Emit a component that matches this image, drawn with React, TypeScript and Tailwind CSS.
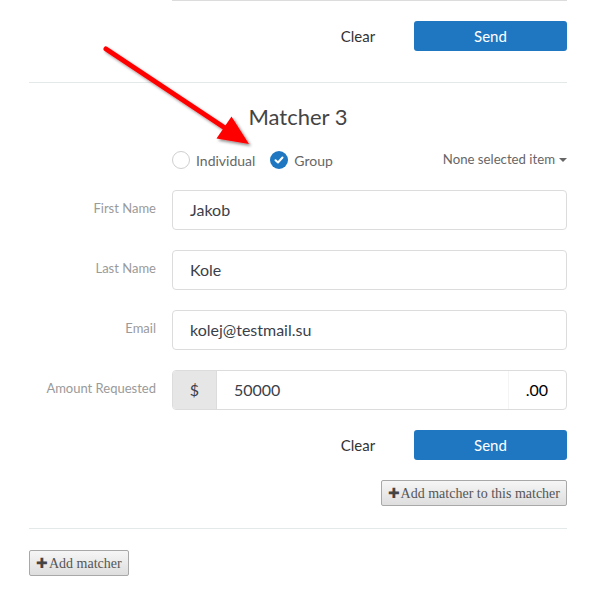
import React from "react";

const sans = "font-['Lato','Noto_Sans',sans-serif]";

function Field({ label, value }: { label: string; value: string }) {
    return (
        <div className="flex items-start">
            <div className="w-[127px] pt-[9px] text-right text-[13px] text-[#9a9a9a]">{label}</div>
            <div className="ml-[16px] flex h-[40px] flex-1 items-center rounded-[4px] border border-[#dcdcdc] px-[17px] text-[16px] text-[#3b3f4a]">
                {value}
            </div>
        </div>
    );
}

function Actions() {
    return (
        <div className="flex justify-end">
            <button className="h-[30px] w-[80px] text-[15px] text-[#333]">Clear</button>
            <button className="ml-[16px] h-[30px] w-[153px] rounded-[3px] bg-[#1f77c2] text-[15px] text-white">Send</button>
        </div>
    );
}

function OldButton({ children }: { children: React.ReactNode }) {
    return (
        <button className="flex h-[26px] items-center rounded-[2px] border border-[#a8a8a8] bg-gradient-to-b from-[#f6f6f6] to-[#dedede] px-[6px] font-['Liberation_Serif',serif] text-[14px] text-[#555]">
            <span className="mr-[1px] text-[14px] text-[#444]">✚</span>
            {children}
        </button>
    );
}

export default function App() {
    return (
        <div className={`relative min-h-[601px] w-full bg-white ${sans}`}>
            <div className="pl-[29px] pr-[28px]">
                {/* bottom edge of the previous form's input */}
                <div className="ml-[143px] h-px bg-[#dcdcdc]" />

                <div className="mt-[20px]">
                    <Actions />
                </div>

                <div className="mt-[31px] h-px bg-[#e3e8e8]" />

                <h2 className="mt-[19px] text-center text-[22px] leading-[30px] text-[#444]">Matcher 3</h2>

                <div className="mt-[18px] flex h-[20px] items-center">
                    <div className="ml-[143px] flex items-center">
                        <span className="h-[18px] w-[18px] rounded-full border border-[#cfcfcf] bg-white" />
                        <span className="ml-[6px] text-[14px] text-[#666]">Individual</span>
                        <span className="ml-[15px] flex h-[18px] w-[18px] items-center justify-center rounded-full bg-[#1f77c2]">
                            <svg width="10" height="10" viewBox="0 0 10 10">
                                <path d="M1.5 5.2 L4 7.5 L8.5 2.5" fill="none" stroke="white" strokeWidth="2" strokeLinecap="round" strokeLinejoin="round" />
                            </svg>
                        </span>
                        <span className="ml-[6px] text-[14px] text-[#666]">Group</span>
                    </div>
                    <div className="ml-auto flex items-center text-[13.2px] text-[#666]">
                        None selected item
                        <span className="ml-[4px] mt-[1px] h-0 w-0 border-x-[4px] border-t-[4px] border-x-transparent border-t-[#666]" />
                    </div>
                </div>

                <div className="mt-[20px] flex flex-col gap-[20px]">
                    <Field label="First Name" value="Jakob" />
                    <Field label="Last Name" value="Kole" />
                    <Field label="Email" value="kolej@testmail.su" />
                    <div className="flex items-start">
                        <div className="w-[127px] pt-[9px] text-right text-[13px] text-[#9a9a9a]">Amount Requested</div>
                        <div className="ml-[16px] flex h-[40px] flex-1 overflow-hidden rounded-[4px] border border-[#dcdcdc] text-[16px] text-[#3b3f4a]">
                            <div className="flex w-[44px] items-center justify-center border-r border-[#dcdcdc] bg-[#e6e6e6]">$</div>
                            <div className="flex flex-1 items-center pl-[17px]">50000</div>
                            <div className="flex w-[58px] items-center justify-end border-l border-[#f4f4f4] pr-[18px] text-black">.00</div>
                        </div>
                    </div>
                </div>

                <div className="mt-[20px]">
                    <Actions />
                </div>

                <div className="mt-[20px] flex justify-end">
                    <OldButton>Add matcher to this matcher</OldButton>
                </div>

                <div className="mt-[22px] h-px bg-[#e3e8e8]" />

                <div className="mt-[21px] flex">
                    <OldButton>Add matcher</OldButton>
                </div>
            </div>

            {/* annotation arrow */}
            <svg className="pointer-events-none absolute left-0 top-0" width="595" height="601" viewBox="0 0 595 601">
                <defs>
                    <filter id="sh" x="-20%" y="-20%" width="140%" height="140%">
                        <feDropShadow dx="2" dy="2" stdDeviation="1.5" floodColor="#000" floodOpacity="0.45" />
                    </filter>
                </defs>
                <g filter="url(#sh)">
                    <line x1="106" y1="49" x2="228" y2="130" stroke="#f00" strokeWidth="5" strokeLinecap="round" />
                    <polygon points="249,144 216.5,138.5 231.5,116.5" fill="#f00" />
                </g>
            </svg>
        </div>
    );
}
